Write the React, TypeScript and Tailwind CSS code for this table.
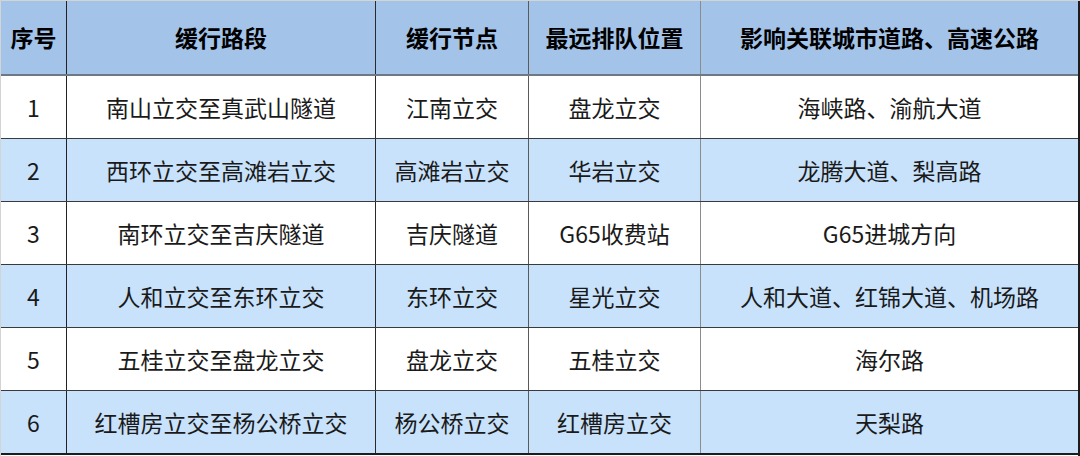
const HEADERS = ["序号", "缓行路段", "缓行节点", "最远排队位置", "影响关联城市道路、高速公路"]

const ROWS: string[][] = [
  ["1", "南山立交至真武山隧道", "江南立交", "盘龙立交", "海峡路、渝航大道"],
  ["2", "西环立交至高滩岩立交", "高滩岩立交", "华岩立交", "龙腾大道、梨高路"],
  ["3", "南环立交至吉庆隧道", "吉庆隧道", "G65收费站", "G65进城方向"],
  ["4", "人和立交至东环立交", "东环立交", "星光立交", "人和大道、红锦大道、机场路"],
  ["5", "五桂立交至盘龙立交", "盘龙立交", "五桂立交", "海尔路"],
  ["6", "红槽房立交至杨公桥立交", "杨公桥立交", "红槽房立交", "天梨路"],
]

// 列ごとの左罫線の色（1列目は外枠）
const COL_BORDERS = [
  "",
  "border-l border-[#222]",
  "border-l border-[#2a2a2a]",
  "border-l border-[#5a5a5a]",
  "border-l border-[#8c8c8c]",
]

const GRID = "grid grid-cols-[65px_309px_153px_172px_1fr]"

export default function App() {
  return (
    <div
      className="w-[1080px] h-[456px] bg-white border-t border-l border-[#d4d4d4] overflow-hidden"
      style={{ fontFamily: '"Noto Sans CJK SC", "Noto Sans", sans-serif' }}
    >
      <div className="border-r-2 border-[#1c1c1c] h-full">
        {/* ヘッダー */}
        <div className={`${GRID} h-[75px] bg-[#a3c3e9] border-b-2 border-[#6f7985]`}>
          {HEADERS.map((h, i) => (
            <div
              key={h}
              className={`flex items-center justify-center text-[23px] font-bold text-black leading-none ${COL_BORDERS[i]}`}
            >
              {h}
            </div>
          ))}
        </div>

        {/* 本文 */}
        {ROWS.map((row, r) => {
          const isLast = r === ROWS.length - 1
          return (
            <div
              key={row[0]}
              className={`${GRID} ${r % 2 === 1 ? "bg-[#c8e2fc]" : "bg-white"} ${
                isLast ? "h-[64px] border-b-2 border-[#1c1c1c]" : "h-[63px] border-b border-[#3a3a3a]"
              }`}
            >
              {row.map((cell, i) => (
                <div
                  key={i}
                  className={`flex items-center justify-center text-[23px] text-[#1a1a1a] leading-none ${COL_BORDERS[i]}`}
                >
                  {cell}
                </div>
              ))}
            </div>
          )
        })}
      </div>
    </div>
  )
}
